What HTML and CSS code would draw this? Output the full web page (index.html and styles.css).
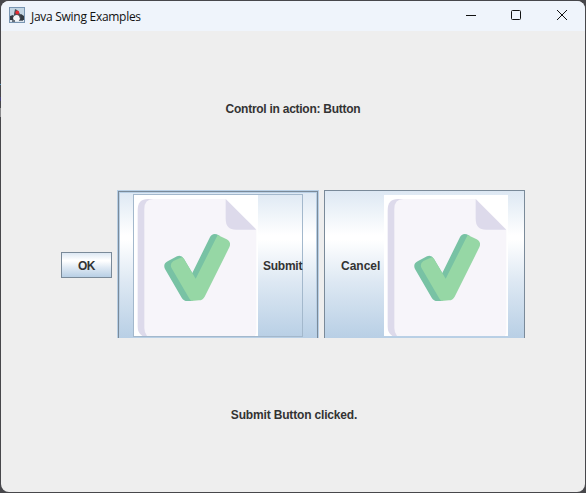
FILE: index.html
```html
<!DOCTYPE html>
<html lang="en">
<head>
<meta charset="utf-8">
<title>Java Swing Examples</title>
<link rel="stylesheet" href="styles.css">
</head>
<body>
<svg class="defs" width="0" height="0">
  <symbol id="document-check" viewBox="42 30 372 423">
    <rect x="42" y="30" width="372" height="423" fill="#fff"/>
    <path d="M100 42H84Q53 42 53 75V425Q53 446 72 456H110Z" fill="#dddaeb"/>
    <path d="M100 42H317L409 134V440Q409 450 401 456H84Q73 446 73 429V72Q73 42 100 42Z" fill="#f7f5fa"/>
    <path d="M317 42L409 134H348Q317 134 317 102Z" fill="#dddaeb"/>
    <path d="M135 252Q128 237 143 229L171 214Q184 209 192 222L217 264L269 158Q276 144 290 148L300 153L240 300L217 348H202Q191 348 185 338Z" fill="#78c2a4"/>
    <path d="M155 250Q148 236 160 228L187 216L192 222L227 281L293 150L320 163Q335 171 328 187L254 335Q248 346 237 346L214 348Q208 342 204 334Z" fill="#96d7a5"/>
  </symbol>
</svg>
<div class="window">
  <header class="titlebar">
    <svg class="app-icon" viewBox="0 0 16 16">
      <rect width="16" height="16" fill="#7895b2"/>
      <rect x="1" y="1" width="14" height="8" fill="#c3d5e3"/>
      <rect x="1" y="9" width="14" height="6" fill="#dce4ec"/>
      <path d="M1 9L4 8 6 10 6 13 1 13ZM10 8L12 7 15 9V13L11 13Z" fill="#343b43"/>
      <path d="M6 2L8 3 11 7 12 12 10 13H5L5 7Z" fill="#4a4f57"/>
      <path d="M5 9Q8 7 10 9L11 12 9 14H5L4 11Z" fill="#f5f7f9"/>
      <circle cx="8.3" cy="5.5" r="1.9" fill="#e32d34"/>
      <path d="M3 13H6V15H3ZM10 13H14V14H10Z" fill="#68727d"/>
    </svg>
    <h1 class="title">Java Swing Examples</h1>
    <svg class="controls" width="102" height="12" viewBox="0 0 102 12" fill="none" stroke="#111">
      <path d="M0 6.5H10"/>
      <rect x="45.5" y="1.5" width="9" height="9" rx="1"/>
      <path d="M91 1L101 11M101 1L91 11"/>
    </svg>
  </header>
  <main class="content">
    <p class="message"><span class="heading">Control in action: Button</span></p>
    <div class="buttons">
      <button class="button ok">OK</button>
      <button class="button submit"><span class="focus"><svg class="picture"><use href="#document-check"/></svg><span class="submit-label">Submit</span></span></button>
      <button class="button cancel"><span class="cancel-label">Cancel</span><svg class="picture"><use href="#document-check"/></svg></button>
    </div>
    <p class="message"><span class="status">Submit Button clicked.</span></p>
  </main>
</div>
</body>
</html>
```
FILE: styles.css
```css
* { box-sizing: border-box; }
body {
  margin: 0;
  height: 493px;
  padding: 1px;
  overflow: hidden;
  background:
    linear-gradient(#47474b 84px, #4a8fb8 84px 85px, #47474b 85px 97px, #45417a 97px 101px, #47474b 101px 108px, #8a8a8c 108px 117px, #47474b 117px) 0 0 / 1px 100% no-repeat,
    #47474b;
  font: bold 12px "Liberation Sans", Arial, sans-serif;
  color: #333;
}
.defs { display: block; height: 0; }
.window {
  height: 491px;
  border-radius: 8px;
  overflow: hidden;
  background: #eee;
}
.titlebar {
  display: flex;
  align-items: center;
  height: 30px;
  padding: 0 17px 0 8px;
  background: #eff4fb;
}
.app-icon { width: 16px; height: 16px; margin-top: -2px; }
.title {
  margin: 0 0 0 6px;
  font: 12px "Open Sans", "Noto Sans", sans-serif;
  letter-spacing: -0.28px;
  color: #111;
}
.controls { margin: -2px 0 0 auto; }
.content {
  display: grid;
  grid-template-rows: 154px 153px 154px;
}
.message {
  display: flex;
  align-items: center;
  justify-content: center;
  margin: 0;
  white-space: nowrap;
}
.heading { padding-top: 1px; letter-spacing: -0.26px; }
.status { padding: 0 0 0 2px; letter-spacing: -0.17px; }
.buttons {
  display: flex;
  align-items: center;
  padding: 5px 0 0 60px;
  height: 153px;
}
.button {
  display: flex;
  align-items: center;
  flex: none;
  padding: 0;
  border: 1px solid #7a8a99;
  border-radius: 0;
  font: inherit;
  color: inherit;
  background: linear-gradient(#dde8f3 0%, #fff 30%, #fff 33%, #dde8f3 62%, #b8cfe5 100%);
}
.ok {
  width: 51px;
  height: 26px;
  justify-content: center;
  margin: 2px 5px 0 0;
  padding-top: 2px;
  letter-spacing: -0.4px;
}
.submit {
  width: 202px;
  height: 148px;
  border: 1px solid #b8cfe5;
  border-bottom: 0;
  padding: 3px 0 1px 15px;
  box-shadow: inset 1px 1px #7a8a99, inset -1px 0 #7a8a99, inset 2px 2px #b8cfe5, inset -2px 0 #b8cfe5;
}
.focus {
  display: flex;
  align-items: center;
  width: 170px;
  height: 143px;
  border: 1px solid #a3b8cc;
}
.picture { flex: none; width: 124px; height: 141px; }
.submit-label { margin-left: 5px; letter-spacing: -0.25px; }
.cancel {
  width: 201px;
  height: 148px;
  margin-left: 5px;
  border-bottom: 0;
  padding: 3px 0 1px 16px;
}
.cancel-label { width: 43px; text-align: left; }
```
